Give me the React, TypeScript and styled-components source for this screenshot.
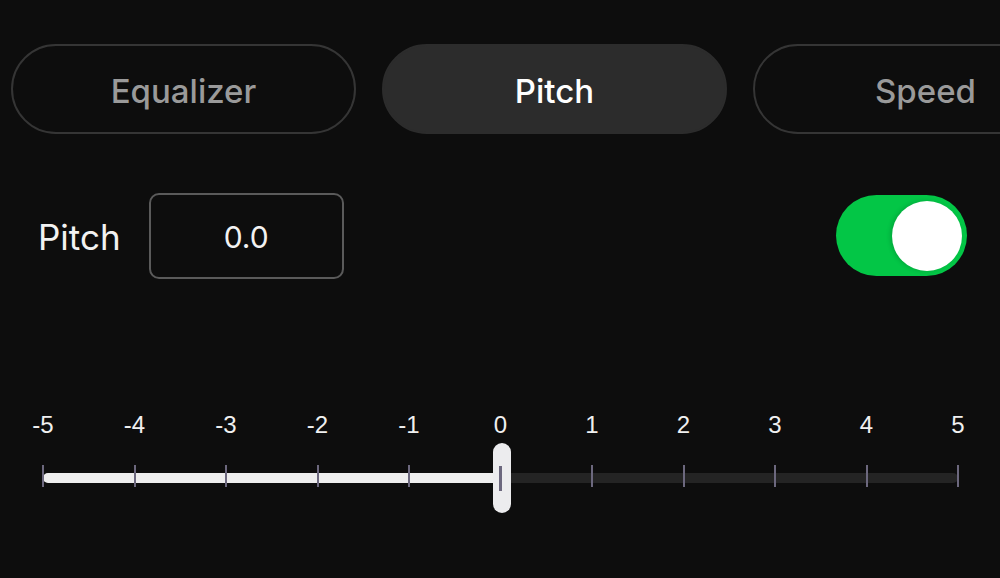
import React from 'react';
import styled, { createGlobalStyle } from 'styled-components';

const GlobalStyle = createGlobalStyle`
  html, body {
    margin: 0;
    padding: 0;
    background: #0d0d0d;
    font-family: Inter, "Noto Sans", sans-serif;
  }
`;

const Page = styled.div`
  width: 1000px;
  height: 578px;
  overflow: hidden;
  background: #0d0d0d;
  padding-top: 44px;
  box-sizing: border-box;
`;

const Tabs = styled.div`
  display: flex;
  gap: 26px;
  padding-left: 11px;
  height: 90px;
`;

const Tab = styled.div<{ $active?: boolean }>`
  flex: 0 0 345px;
  box-sizing: border-box;
  height: 90px;
  padding-top: 3px;
  border-radius: 45px;
  border: 2px solid ${(p) => (p.$active ? '#2c2c2c' : '#353535')};
  background: ${(p) => (p.$active ? '#2c2c2c' : 'transparent')};
  color: ${(p) => (p.$active ? '#ffffff' : '#9a9a9a')};
  font-size: 33px;
  font-weight: 500;
  display: flex;
  align-items: center;
  justify-content: center;
`;

const Controls = styled.div`
  display: flex;
  align-items: center;
  justify-content: space-between;
  margin-top: 59px;
  height: 85px;
  padding: 0 33px 0 38px;
`;

const Field = styled.div`
  display: flex;
  align-items: center;
  gap: 28px;
`;

const Label = styled.span`
  color: #f2f2f2;
  font-size: 35px;
  padding-top: 2px;
`;

const ValueBox = styled.div`
  width: 195px;
  height: 86px;
  box-sizing: border-box;
  padding-top: 2px;
  border: 2px solid #5a5a5a;
  border-radius: 10px;
  display: flex;
  align-items: center;
  justify-content: center;
  color: #f2f2f2;
  font-size: 30px;
`;

const Switch = styled.div<{ $on?: boolean }>`
  width: 131px;
  height: 81px;
  border-radius: 41px;
  background: ${(p) => (p.$on ? '#03c646' : '#3a3a3a')};
  display: flex;
  align-items: center;
  justify-content: ${(p) => (p.$on ? 'flex-end' : 'flex-start')};
  padding: 0 5px;
  box-sizing: border-box;
`;

const Knob = styled.div`
  width: 70px;
  height: 70px;
  border-radius: 50%;
  background: #ffffff;
  box-shadow: -2px 0 4px rgba(0, 0, 0, 0.15);
`;

const Slider = styled.div`
  width: 915px;
  margin: 134px 0 0 43px;
`;

const Scale = styled.div`
  position: relative;
  height: 23px;
`;

const ScaleLabel = styled.span<{ $pos: number }>`
  position: absolute;
  top: 1px;
  left: ${(p) => p.$pos}%;
  transform: translateX(-50%);
  font-family: "Liberation Sans", Arial, sans-serif;
  font-size: 24px;
  line-height: 23px;
  color: #f0f0f0;
`;

const TrackArea = styled.div`
  position: relative;
  height: 70px;
  margin-top: 8px;
`;

const Rail = styled.div`
  position: absolute;
  top: 30px;
  left: 0;
  right: 0;
  height: 10px;
  border-radius: 5px;
  background: #242424;
`;

const Fill = styled.div<{ $pct: number }>`
  position: absolute;
  top: 30px;
  left: 0;
  width: ${(p) => p.$pct}%;
  height: 10px;
  border-radius: 5px 0 0 5px;
  background: #eeeeee;
`;

const Tick = styled.div<{ $pos: number }>`
  position: absolute;
  top: 22px;
  left: ${(p) => p.$pos}%;
  width: 2px;
  height: 22px;
  margin-left: -1px;
  background: #6c687e;
`;

const Thumb = styled.div<{ $pos: number }>`
  position: absolute;
  top: 0;
  left: ${(p) => p.$pos}%;
  width: 18px;
  height: 70px;
  margin-left: -8px;
  border-radius: 9px;
  background: #ececee;
  display: flex;
  align-items: center;
  justify-content: center;
`;

const ThumbMark = styled.div`
  width: 3px;
  height: 25px;
  margin-left: -2px;
  background: #6c687e;
`;

const steps = [-5, -4, -3, -2, -1, 0, 1, 2, 3, 4, 5];
const value = 0;

const App = () => {
  const pct = ((value + 5) / 10) * 100;
  return (
    <>
      <GlobalStyle />
      <Page>
        <Tabs>
          <Tab>Equalizer</Tab>
          <Tab $active>Pitch</Tab>
          <Tab>Speed</Tab>
        </Tabs>
        <Controls>
          <Field>
            <Label>Pitch</Label>
            <ValueBox>{value.toFixed(1)}</ValueBox>
          </Field>
          <Switch $on>
            <Knob />
          </Switch>
        </Controls>
        <Slider>
          <Scale>
            {steps.map((s, i) => (
              <ScaleLabel key={s} $pos={i * 10}>
                {s}
              </ScaleLabel>
            ))}
          </Scale>
          <TrackArea>
            <Rail />
            <Fill $pct={pct} />
            {steps.map((s, i) => (
              <Tick key={s} $pos={i * 10} />
            ))}
            <Thumb $pos={pct}>
              <ThumbMark />
            </Thumb>
          </TrackArea>
        </Slider>
      </Page>
    </>
  );
};

export default App;
